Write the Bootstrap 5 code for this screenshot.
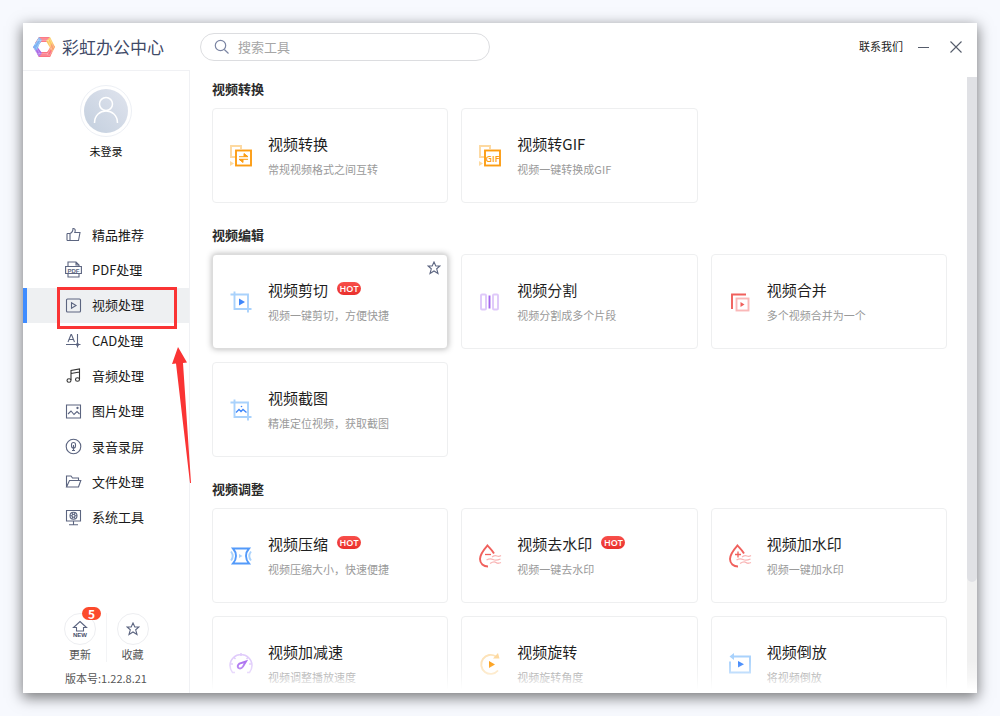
<!DOCTYPE html>
<html lang="zh-CN">
<head>
<meta charset="utf-8">
<meta name="viewport" content="width=device-width, initial-scale=1">
<title>彩虹办公中心</title>
<link href="https://cdn.jsdelivr.net/npm/bootstrap@5.3.0/dist/css/bootstrap.min.css" rel="stylesheet">
<style>
  body { font-family: "Noto Sans CJK SC", sans-serif; background: #f7f9fe; color: #222; font-size: 13px; padding: 23px; }
  .app-window { height: calc(100vh - 46px); background: #fff; box-shadow: 0 4px 13px 1px rgba(0,0,0,.5); }
  .app-header { height: 47px; }
  .brand { width: 177px; padding-left: 9px; font-size: 17px; color: #3f4a68; text-decoration: none; line-height: 24px; gap: 6px; }
  .search-box { width: 290px; height: 28px; border: 1px solid #dcdde0; border-radius: 14px; padding: 0 13px; gap: 8px; }
  .search-box input { font-size: 13px; line-height: 20px; min-width: 0; outline: 0; }
  .search-box input::placeholder { color: #a6a6a6; }
  .window-actions { padding-right: 15px; }
  .contact-link { font-size: 11px; color: #222; text-decoration: none; margin-right: 15px; }
  .minimize-btn { margin-right: 20px; }
  .plain-btn { border: 0; background: none; padding: 0; line-height: 0; color: #555c6b; }

  .sidebar { width: 167px; border-top: 1px solid #f0f1f4; border-right: 1px solid #f0f1f4; padding: 14px 0 7px; }
  .avatar { width: 52px; height: 52px; border: 1px solid #edf0f5; padding: 3px; line-height: 0; }
  .login-name { font-size: 11px; line-height: 18px; margin-top: 5px; color: #111; }
  .side-menu { height: 318px; margin-top: 57px; }
  .side-item { border-left: 4px solid transparent; padding-left: 38px; gap: 10px; color: #1a1a1a; text-decoration: none; line-height: 20px; }
  .side-item.active { background: #eef0f2; border-left-color: #3f8cff; }
  .side-item > svg { width: 17px; height: 17px; }
  .line-icon { fill: none; stroke: #5c6580; stroke-width: 1.1; }
  .callout-frame { left: 30px; top: -1px; width: 120px; height: 42px; border: 3px solid #fa3434; pointer-events: none; }
  .side-item > .callout-arrow { left: 145px; top: 59px; width: 22px; height: 137px; z-index: 2; pointer-events: none; }

  .round-item { width: 52px; border: 0; background: none; padding: 0; font-size: 11px; line-height: 16px; color: #555; }
  .round-item + .round-item { border-left: 1px solid #f3f4f6; }
  .round-icon { width: 32px; height: 32px; border: 1px solid #edeef1; margin-bottom: 1px; }
  .count-badge { top: -7px; left: 17px; width: 19px; height: 13px; border-radius: 7px; background: #fc4a2c; color: #fff; font-size: 12px; font-weight: 700; line-height: 13px; }
  .version { font-size: 11px; line-height: 16px; color: #555; margin-top: 8px; }

  .tool-area { padding: 9px 20px 0 22px; }
  .group-title { font-size: 13px; font-weight: 700; line-height: 20px; margin: 0 0 9px; color: #2b2b2b; }
  .tool-group { margin-bottom: 22px; }
  .tool-grid { --bs-gutter-x: 13px; --bs-gutter-y: 13px; }
  .tool-card { height: 95px; border: 1px solid #eeeff0; border-radius: 4px; padding-left: 16px; gap: 15px; }
  .tool-card > svg { width: 24px; height: 24px; flex: none; fill: none; stroke-width: 1.9; }
  .tool-card.hovered { border-color: #dcdcdc; box-shadow: 0 0 6px rgba(0,0,0,.3); }
  .tool-name { font-size: 15px; line-height: 22px; color: #1f1f1f; text-decoration: none; }
  .tool-note { font-size: 11px; line-height: 18px; margin: 5px 0 0; color: #9a9a9a; }
  .hot-tag { width: 24px; height: 13px; border-radius: 7px; background: linear-gradient(#f8504b, #e92f2c); color: #fff; font: 600 9px/13px "Open Sans", sans-serif; text-align: center; margin: 0 0 3px 9px; }
  .star-btn { top: 6px; right: 6px; }
  .scroll-track { width: 10px; margin-top: 7px; background: #f0f0f0; }
  .scroll-thumb { height: 82%; background: #e0e1e5; border-radius: 0 0 5px 5px; }
  .bottom-fade { height: 32px; background: linear-gradient(rgba(255,255,255,0), rgba(255,255,255,.4) 50%, #fff 90%); pointer-events: none; z-index: 3; }
</style>
</head>
<body>
<div class="app-window d-flex flex-column">
  <header class="app-header d-flex align-items-center flex-shrink-0">
    <a href="#" class="brand d-flex align-items-center">
      <svg width="24" height="24" viewBox="-12 -12 24 24" aria-hidden="true">
        <path d="M-5-10H6L3-5H-3L-6-2-9-4Z" fill="#fb7b86"/>
        <path d="M6-10 11 0 8 3 5-1 2-6Z" fill="#fccb62"/>
        <path d="M11 0 6 10 1 9 4 4 6 0 8-4Z" fill="#fba26c"/>
        <path d="M6 10H-5L-7 7-2 5H3L6 2 8 5Z" fill="#fb7583"/>
        <path d="M-5 10-11 0-8-2-5 2-2 6Z" fill="#a967e6"/>
        <path d="M-11 0-5-10-2-7-5-2-6 1-8 4Z" fill="#7cb3f3"/>
        <g stroke="#fff" stroke-opacity=".55" stroke-width=".5"><path d="M-6-8 6-8M-7-6.500 5-6.500M6-8 10 1M4-7 8 3M9 3 5 9M7 1 3 8M5 8H-6M4 6.500H-6M-6 8-10 1M-4 7-8 0M-9-2-5-8M-7 0-3-7"/></g>
      </svg>
      <span>彩虹办公中心</span>
    </a>
    <label class="search-box d-flex align-items-center">
      <svg width="16" height="16" viewBox="0 0 16 16" fill="none" stroke="#7b85a3" stroke-width="1.200" aria-hidden="true"><circle cx="6.500" cy="6.500" r="5.200"/><path d="M10.300 10.500 14.500 14.500"/></svg>
      <input type="search" class="border-0 p-0 flex-grow-1 bg-transparent" placeholder="搜索工具" aria-label="搜索工具">
    </label>
    <div class="window-actions ms-auto d-flex align-items-center">
      <a href="#" class="contact-link">联系我们</a>
      <button class="plain-btn minimize-btn" aria-label="最小化"><svg width="12" height="12" viewBox="0 0 12 12" stroke="currentColor"><path d="M0 6.500H11"/></svg></button>
      <button class="plain-btn" aria-label="关闭"><svg width="12" height="12" viewBox="0 0 12 12" stroke="currentColor" stroke-width="1.100"><path d="M.5.500 11.500 11.500M11.500.500.500 11.500"/></svg></button>
    </div>
  </header>

  <div class="d-flex flex-grow-1" style="min-height:0">
    <aside class="sidebar d-flex flex-column flex-shrink-0">
      <div class="text-center">
        <div class="avatar rounded-circle mx-auto">
          <svg width="44" height="44" viewBox="0 0 44 44" aria-hidden="true"><defs><linearGradient id="av" x1="1" y1="0" x2="0" y2="1"><stop stop-color="#e0e4ee"/><stop offset="1" stop-color="#c3cfde"/></linearGradient></defs><circle cx="22" cy="22" r="22" fill="url(#av)"/><g fill="none" stroke="#fff" stroke-width="1.500"><circle cx="22" cy="15" r="6.500"/><path d="M10.500 34C10.500 18 33.500 18 33.500 34"/></g></svg>
        </div>
        <div class="login-name">未登录</div>
      </div>

      <nav class="side-menu d-flex flex-column flex-shrink-0">
        <a href="#" class="side-item d-flex align-items-center flex-fill"><svg class="line-icon" viewBox="0 0 17 17"><path d="M2 7.500H5V14.500H2M2 7.500V14.500M5 7.500C7.500 6.500 8 5 8 2.500 10.500 2 10.500 5 9.800 6.500H15L13.500 14.500H5"/></svg>精品推荐</a>
        <a href="#" class="side-item d-flex align-items-center flex-fill"><svg class="line-icon" viewBox="0 0 17 17"><path d="M3 5V1H11L14 4V5M3 13V16H14V13M11 1V4H14M.6 5.500H16.400V12.500H.6Z"/><text x="8.500" y="11.500" text-anchor="middle" font-family="Liberation Sans" font-size="6" font-weight="700" fill="#5c6580" stroke="none">PDF</text></svg>PDF处理</a>
        <a href="#" class="side-item active d-flex align-items-center flex-fill position-relative"><svg class="line-icon" viewBox="0 0 17 17"><rect x="1.500" y="2" width="14" height="13" rx="1"/><path d="M6.500 5.800V11.200L11 8.500Z"/></svg>视频处理
          <span class="callout-frame position-absolute"></span>
          <svg class="callout-arrow position-absolute" viewBox="0 0 22 137" aria-hidden="true"><path d="M6 0 0 17 4 16.500 18 136H19L11 16 15 15.500Z" fill="#fa3434"/></svg>
        </a>
        <a href="#" class="side-item d-flex align-items-center flex-fill"><svg class="line-icon" viewBox="0 0 17 17"><path d="M3 10 6 2.500H6.500L9.500 10M4 7.500H8.500M12.500 2V15.500M1 12.500H15.500"/><circle cx="12.500" cy="12.500" r="1" fill="#5c6580"/></svg>CAD处理</a>
        <a href="#" class="side-item d-flex align-items-center flex-fill"><svg class="line-icon" viewBox="0 0 17 17"><g stroke="#333"><path d="M6 13V3.500L14.500 2V12M6 6.500 14.500 5"/><ellipse cx="4" cy="13.500" rx="2" ry="1.800"/><ellipse cx="12.500" cy="12.500" rx="2" ry="1.800"/></g></svg>音频处理</a>
        <a href="#" class="side-item d-flex align-items-center flex-fill"><svg class="line-icon" viewBox="0 0 17 17"><path d="M1.500 2H15.500V15H1.500ZM3 11 6 8 9 11.500 12 8.500 14.500 11"/><circle cx="12.500" cy="5" r=".6" fill="#5c6580"/></svg>图片处理</a>
        <a href="#" class="side-item d-flex align-items-center flex-fill"><svg class="line-icon" viewBox="0 0 17 17"><circle cx="8.500" cy="8.500" r="7.300"/><rect x="6.500" y="4.500" width="4" height="5.500" rx="2"/><path d="M8.500 7V12.500M7 12.500H10"/></svg>录音录屏</a>
        <a href="#" class="side-item d-flex align-items-center flex-fill"><svg class="line-icon" viewBox="0 0 17 17"><path d="M1.500 14V3H6L7.500 5H13.500V7.500M1.500 14 4.500 7.500H15.800L13.500 14Z"/></svg>文件处理</a>
        <a href="#" class="side-item d-flex align-items-center flex-fill"><svg class="line-icon" viewBox="0 0 17 17"><path d="M1.500 1.500H15.500V12H1.500ZM8.500 12V15.500M4 15.800H13"/><circle cx="8.500" cy="6.800" r="3.500"/><circle cx="8.500" cy="6.800" r="1.500"/><path d="M5 6.800H7M10 6.800H12M6.800 3.800 7.800 5.500M10.200 3.800 9.200 5.500M6.800 9.800 7.800 8M10.200 9.800 9.200 8"/></svg>系统工具</a>
      </nav>

      <div class="mt-auto text-center">
        <div class="d-flex justify-content-center">
          <button class="round-item">
            <span class="round-icon rounded-circle d-flex align-items-center justify-content-center mx-auto position-relative">
              <svg width="18" height="18" viewBox="0 0 18 18" class="line-icon" aria-hidden="true"><path d="M9 1.500 15.500 7.500H12.500V11H5.500V7.500H2.500Z"/><text x="9" y="17" text-anchor="middle" font-family="Liberation Sans" font-size="6" font-weight="700" fill="#48506a" stroke="none">NEW</text></svg>
              <span class="count-badge position-absolute">5</span>
            </span>更新
          </button>
          <button class="round-item">
            <span class="round-icon rounded-circle d-flex align-items-center justify-content-center mx-auto">
              <svg width="14" height="14" viewBox="0 0 14 14" class="line-icon" aria-hidden="true"><path d="M7 1 8.800 5H13L9.700 7.800 11 12.500 7 10 3 12.500 4.300 7.800 1 5H5.200Z"/></svg>
            </span>收藏
          </button>
        </div>
        <div class="version">版本号:1.22.8.21</div>
      </div>
    </aside>

    <main class="d-flex flex-grow-1 overflow-hidden position-relative">
      <div class="tool-area flex-grow-1">
        <section class="tool-group">
          <h2 class="group-title">视频转换</h2>
          <div class="row row-cols-3 tool-grid">
            <div class="col"><div class="card tool-card flex-row align-items-center">
              <svg viewBox="0 0 24 24"><path d="M7 13H2V2H12V5" stroke="#fdd9a0"/><path d="M1 17V22L5 19.500Z" fill="#fdd9a0"/><rect x="7" y="6.500" width="15" height="15" stroke="#fc9d14"/><path d="M10 12.700H19L15 9.500V12.700M19 15.300H10L14 18.500V15.300" stroke="#fc9d14" fill="#fc9d14" stroke-width="1"/></svg>
              <div><a href="#" class="tool-name stretched-link">视频转换</a><p class="tool-note">常规视频格式之间互转</p></div>
            </div></div>
            <div class="col"><div class="card tool-card flex-row align-items-center">
              <svg viewBox="0 0 24 24"><path d="M7 13H2V2H12V5" stroke="#fdd9a0"/><path d="M1 17V22L5 19.500Z" fill="#fdd9a0"/><rect x="7" y="6.500" width="15" height="15" stroke="#fc9d14"/><text x="14.500" y="17.500" text-anchor="middle" font-family="Open Sans" font-size="9" font-weight="600" fill="#fc9d14">GIF</text></svg>
              <div><a href="#" class="tool-name stretched-link">视频转GIF</a><p class="tool-note">视频一键转换成GIF</p></div>
            </div></div>
          </div>
        </section>

        <section class="tool-group">
          <h2 class="group-title">视频编辑</h2>
          <div class="row row-cols-3 tool-grid">
            <div class="col"><div class="card tool-card hovered flex-row align-items-center">
              <svg viewBox="0 0 24 24"><path d="M5.500 1.500V19H22.500M1.500 4.500H19V22.500" stroke="#a9d2fc"/><path d="M10 8.500V15.500L16 12Z" fill="#3f87fa"/></svg>
              <div><div class="d-flex align-items-center"><a href="#" class="tool-name stretched-link">视频剪切</a><span class="hot-tag">HOT</span></div><p class="tool-note">视频一键剪切，方便快捷</p></div>
              <button class="plain-btn star-btn position-absolute z-2" aria-label="收藏"><svg width="14" height="14" viewBox="0 0 14 14" class="line-icon"><path d="M7 1 8.800 5H13L9.700 7.800 11 12.500 7 10 3 12.500 4.300 7.800 1 5H5.200Z"/></svg></button>
            </div></div>
            <div class="col"><div class="card tool-card flex-row align-items-center">
              <svg viewBox="0 0 24 24"><g stroke="#dfc9fa"><rect x="3" y="4.500" width="5" height="15" rx="1"/><rect x="15" y="4.500" width="5" height="15" rx="1"/></g><path d="M11.500 5.500V18.500" stroke="#a467ee"/></svg>
              <div><a href="#" class="tool-name stretched-link">视频分割</a><p class="tool-note">视频分割成多个片段</p></div>
            </div></div>
            <div class="col"><div class="card tool-card flex-row align-items-center">
              <svg viewBox="0 0 24 24"><path d="M4 19V4.500H18" stroke="#f0605c"/><rect x="8.500" y="8.500" width="12" height="12" stroke="#fab8b8"/><path d="M12.500 12V17L16.500 14.500Z" fill="#f0605c"/></svg>
              <div><a href="#" class="tool-name stretched-link">视频合并</a><p class="tool-note">多个视频合并为一个</p></div>
            </div></div>
            <div class="col"><div class="card tool-card flex-row align-items-center">
              <svg viewBox="0 0 24 24"><path d="M5.500 1.500V19H22.500M1.500 4.500H19V22.500" stroke="#a9d2fc"/><path d="M7 14.500 10 11.500 12 13.500 14 11.500 17.500 14.500" stroke="#3f87fa" stroke-width="1.300"/><circle cx="12.500" cy="8.500" r=".8" fill="#3f87fa"/></svg>
              <div><a href="#" class="tool-name stretched-link">视频截图</a><p class="tool-note">精准定位视频，获取截图</p></div>
            </div></div>
          </div>
        </section>

        <section class="tool-group">
          <h2 class="group-title">视频调整</h2>
          <div class="row row-cols-3 tool-grid">
            <div class="col"><div class="card tool-card flex-row align-items-center">
              <svg viewBox="0 0 24 24"><path d="M4 4.500H20C16 9 16 15 20 19.500H4C8 15 8 9 4 4.500Z" stroke="#539afa"/><path d="M2 7.500Q5.500 12 2 16.500M22 7.500Q18.500 12 22 16.500" stroke="#a9d2fc"/><path d="M10 10V14L13.500 12Z" fill="#a9d2fc"/></svg>
              <div><div class="d-flex align-items-center"><a href="#" class="tool-name stretched-link">视频压缩</a><span class="hot-tag">HOT</span></div><p class="tool-note">视频压缩大小，快速便捷</p></div>
            </div></div>
            <div class="col"><div class="card tool-card flex-row align-items-center">
              <svg viewBox="0 0 24 24"><path d="M16 9.500C14 6 11.500 4 9.500 1.500 6 5.500 2 10 2 15 2 19.500 5.500 22.500 10 22.500" stroke="#f0605c"/><path d="M7 10.500H13" stroke="#f0605c" stroke-width="1.300"/><path d="M14 13Q17 11 19 12T23 11.500M8.500 16Q12 14 15 15.500T22.500 15M12 19.500Q16 17 18 18.500T23 18.500" stroke="#f9b5b5" stroke-width="1.300"/></svg>
              <div><div class="d-flex align-items-center"><a href="#" class="tool-name stretched-link">视频去水印</a><span class="hot-tag">HOT</span></div><p class="tool-note">视频一键去水印</p></div>
            </div></div>
            <div class="col"><div class="card tool-card flex-row align-items-center">
              <svg viewBox="0 0 24 24"><path d="M16 9.500C14 6 11.500 4 9.500 1.500 6 5.500 2 10 2 15 2 19.500 5.500 22.500 10 22.500" stroke="#f0605c"/><path d="M7 10.500H13M10 7.500V13.500" stroke="#f0605c" stroke-width="1.300"/><path d="M14 13Q17 11 19 12T23 11.500M8.500 16Q12 14 15 15.500T22.500 15M12 19.500Q16 17 18 18.500T23 18.500" stroke="#f9b5b5" stroke-width="1.300"/></svg>
              <div><a href="#" class="tool-name stretched-link">视频加水印</a><p class="tool-note">视频一键加水印</p></div>
            </div></div>
            <div class="col"><div class="card tool-card flex-row align-items-center">
              <svg viewBox="0 0 24 24"><path d="M6 20.500H3.500A11 11 0 1 1 20.500 20.500H18M12 1V4M1 12H4M20 12H23M4.500 5 6.500 7M19.500 5 17.500 7" stroke="#e0ccfb" stroke-width="1.500"/><path d="M17 9.500 10.500 11.500Q7.500 14 9.500 16 12 17.500 14 14.500Z" stroke="#ac70f0"/></svg>
              <div><a href="#" class="tool-name stretched-link">视频加减速</a><p class="tool-note">视频调整播放速度</p></div>
            </div></div>
            <div class="col"><div class="card tool-card flex-row align-items-center">
              <svg viewBox="0 0 24 24"><path d="M18 4.500A9.500 9.500 0 1 0 20 18.500" stroke="#fde3b9"/><path d="M15 6.500H21.500L20 1Z" fill="#fdd9a0"/><path d="M11 9V16L17 12.500Z" fill="#fc9d14"/></svg>
              <div><a href="#" class="tool-name stretched-link">视频旋转</a><p class="tool-note">视频旋转角度</p></div>
            </div></div>
            <div class="col"><div class="card tool-card flex-row align-items-center">
              <svg viewBox="0 0 24 24"><path d="M2 9.500V20.500H22V4.500H4" stroke="#a9d2fc"/><path d="M6 1V8L1.500 4.500Z" fill="#a9d2fc"/><path d="M10 9V15.500L16 12.300Z" fill="#3f87fa"/></svg>
              <div><a href="#" class="tool-name stretched-link">视频倒放</a><p class="tool-note">将视频倒放</p></div>
            </div></div>
          </div>
        </section>
      </div>
      <div class="scroll-track flex-shrink-0"><div class="scroll-thumb"></div></div>
      <div class="bottom-fade position-absolute bottom-0 start-0 end-0"></div>
    </main>
  </div>
</div>
<script src="https://cdn.jsdelivr.net/npm/bootstrap@5.3.0/dist/js/bootstrap.bundle.min.js"></script>
</body>
</html>
